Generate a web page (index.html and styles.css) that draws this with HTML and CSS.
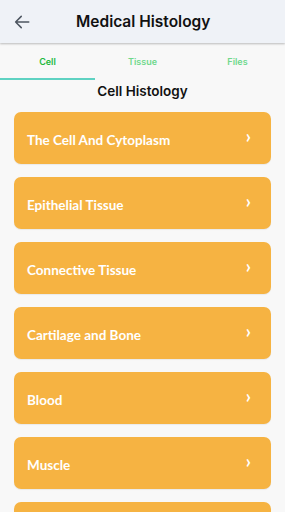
FILE: index.html
```html
<!DOCTYPE html>
<html lang="en">
<head>
  <meta charset="UTF-8" />
  <meta name="viewport" content="width=device-width, initial-scale=1.0"/>
  <title>Medical Histology</title>
  <link rel="stylesheet" href="styles.css">
</head>
<body>
  <div class="app-bar">
    <button class="back-button" aria-label="Back">
      <svg width="18" height="18" viewBox="0 0 24 24"><path d="M21 12H3.5M11 4.5L3.5 12l7.5 7.5" fill="none" stroke="#4d5560" stroke-width="2" stroke-linecap="round" stroke-linejoin="round"/></svg>
    </button>
    <div class="app-title">Medical Histology</div>
  </div>

  <div class="tabs">
    <div class="tab active">Cell</div>
    <div class="tab">Tissue</div>
    <div class="tab">Files</div>
  </div>

  <div class="section-title">Cell Histology</div>

  <div class="list">
    <div class="card">The Cell And Cytoplasm<span class="chevron">›</span></div>
    <div class="card">Epithelial Tissue<span class="chevron">›</span></div>
    <div class="card">Connective Tissue<span class="chevron">›</span></div>
    <div class="card">Cartilage and Bone<span class="chevron">›</span></div>
    <div class="card">Blood<span class="chevron">›</span></div>
    <div class="card">Muscle<span class="chevron">›</span></div>
    <div class="card card-partial"></div>
  </div>
</body>
</html>
```

FILE: styles.css
```css
body {
  font-family: Lato, Arial, sans-serif;
  margin: 0;
  padding: 0;
  background-color: #f8f8f8;
  overflow: hidden;
}

.app-bar {
  height: 43px;
  display: flex;
  align-items: center;
  background-color: #eff2f7;
  box-shadow: 0 1px 2px rgba(0, 0, 0, 0.25);
  position: relative;
}

.back-button {
  border: none;
  background: none;
  padding: 0;
  margin-left: 13px;
  width: 18px;
  height: 18px;
  display: flex;
}

.app-title {
  font-family: Inter, sans-serif;
  font-size: 15.5px;
  font-weight: 600;
  color: #111;
  margin-left: 45px;
}

.tabs {
  display: flex;
  height: 37px;
}

.tab {
  flex: 1;
  display: flex;
  align-items: center;
  justify-content: center;
  font-family: Inter, sans-serif;
  font-size: 9px;
  font-weight: 600;
  color: #6fd88c;
  padding-top: 2px;
  border-bottom: 2px solid transparent;
}

.tab.active {
  color: #22b83d;
  border-bottom-color: #5fd2c2;
}

.section-title {
  font-family: Inter, sans-serif;
  text-align: center;
  font-size: 13.5px;
  font-weight: 600;
  color: #111;
  margin-top: 1px;
  line-height: 20px;
}

.list {
  display: flex;
  flex-direction: column;
  gap: 13px;
  padding: 11px 14px 0;
}

.card {
  box-sizing: border-box;
  height: 52px;
  background-color: #f6b342;
  border-radius: 7px;
  display: flex;
  align-items: center;
  justify-content: space-between;
  padding: 3px 20px 0 13px;
  color: #fff;
  font-size: 13.5px;
  font-weight: 700;
  box-shadow: 0 1px 1px rgba(0, 0, 0, 0.06);
  flex-shrink: 0;
}

.chevron {
  font-size: 18px;
  font-weight: 700;
  margin-top: -8px;
}
```
